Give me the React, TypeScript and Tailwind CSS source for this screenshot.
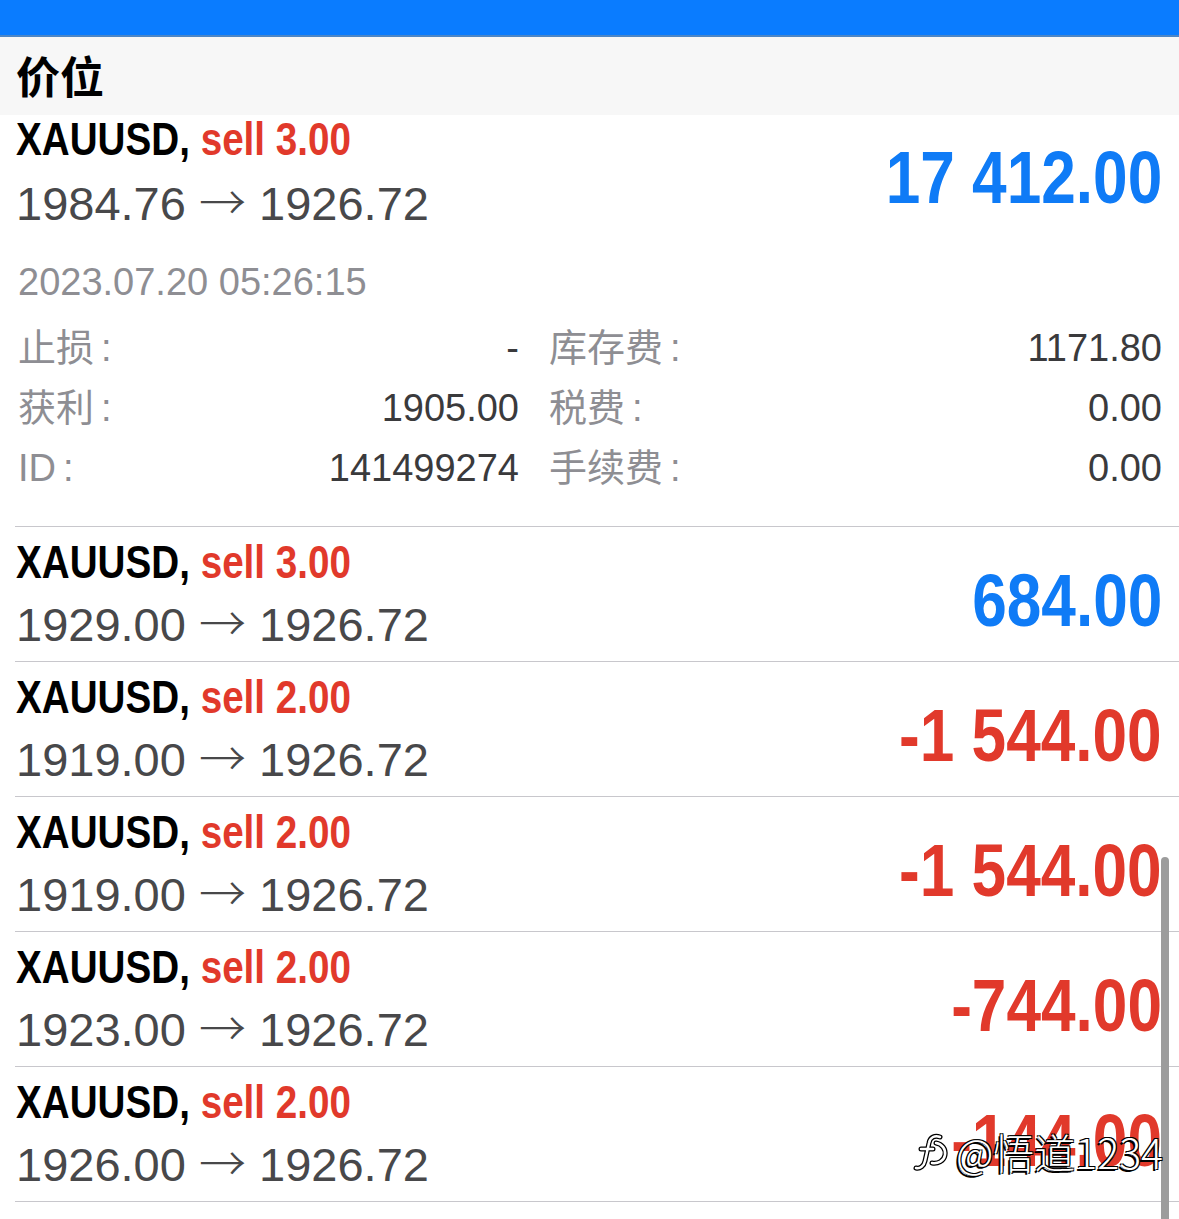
const cond = "font-['Liberation_Sans',sans-serif] font-bold"
const sans = "font-['Liberation_Sans','Noto_Sans_CJK_SC',sans-serif]"
const cjk = "font-['Liberation_Sans','Noto_Sans_CJK_SC',sans-serif]"

type Position = {
  symbol: string
  side: string
  open: string
  current: string
  profit: string
  up: boolean
}

const positions: Position[] = [
  { symbol: "XAUUSD,", side: "sell 3.00", open: "1929.00", current: "1926.72", profit: "684.00", up: true },
  { symbol: "XAUUSD,", side: "sell 2.00", open: "1919.00", current: "1926.72", profit: "-1 544.00", up: false },
  { symbol: "XAUUSD,", side: "sell 2.00", open: "1919.00", current: "1926.72", profit: "-1 544.00", up: false },
  { symbol: "XAUUSD,", side: "sell 2.00", open: "1923.00", current: "1926.72", profit: "-744.00", up: false },
  { symbol: "XAUUSD,", side: "sell 2.00", open: "1926.00", current: "1926.72", profit: "-144.00", up: false },
  { symbol: "XTIUSD,", side: "sell 10.00", open: "75.84", current: "75.61", profit: "230.00", up: true },
]

function Title({ symbol, side }: { symbol: string; side: string }) {
  return (
    <div className={`${cond} origin-left scale-x-[0.84] whitespace-nowrap text-[46px] leading-none text-black`}>
      {symbol} <span className="text-[#e1392b]">{side}</span>
    </div>
  )
}

function Prices({ open, current }: { open: string; current: string }) {
  return (
    <div className={`${sans} h-[47px] whitespace-nowrap text-[47px] leading-none text-[#48484a]`}>
      {open} <span className="font-['Noto_Sans_CJK_SC',sans-serif] font-light leading-[0]">→</span> {current}
    </div>
  )
}

function Profit({ value, up }: { value: string; up: boolean }) {
  return (
    <div
      className={`${cond} mt-[25px] origin-right scale-x-[0.84] whitespace-nowrap text-[74px] leading-none ${
        up ? "text-[#0f7bf6]" : "text-[#e1392b]"
      }`}
    >
      {value}
    </div>
  )
}

function Detail({ label, value }: { label: string; value: string }) {
  return (
    <div className="flex h-[60px] items-center justify-between">
      <span className={`${cjk} text-[38px] leading-none text-[#8e8e93]`}>
        {label}
        <span className="ml-[7px]">:</span>
      </span>
      <span className={`${sans} text-[38px] leading-none text-[#3a3a3c]`}>{value}</span>
    </div>
  )
}

function Divider() {
  return <div className="ml-[15px] h-px bg-[#c8c7cc]" />
}

export default function App() {
  return (
    <div className="relative h-[1219px] w-[1179px] overflow-hidden bg-white">
      <div className="h-[37px] border-b-2 border-[#4c86c6] bg-[#0a7cff]" />
      <div className="flex h-[78px] items-center bg-[#f7f7f7] px-4 pt-[6px]">
        <span className={`${cjk} text-[44px] font-bold leading-none text-black`}>价位</span>
      </div>

      {/* expanded position */}
      <div className="pl-4 pr-[17px] pb-[28px] pt-px">
        <div className="flex items-start justify-between">
          <div className="flex flex-col gap-[18px]">
            <Title symbol="XAUUSD," side="sell 3.00" />
            <Prices open="1984.76" current="1926.72" />
          </div>
          <Profit value="17 412.00" up />
        </div>
        <div className={`${sans} mt-[36px] pl-[2px] text-[38px] leading-none text-[#8e8e93]`}>
          2023.07.20 05:26:15
        </div>
        <div className="mt-[17px] grid grid-cols-[501px_1fr] gap-x-[30px] pl-[2px]">
          <Detail label="止损" value="-" />
          <Detail label="库存费" value="1171.80" />
          <Detail label="获利" value="1905.00" />
          <Detail label="税费" value="0.00" />
          <Detail label="ID" value="141499274" />
          <Detail label="手续费" value="0.00" />
        </div>
      </div>
      <Divider />

      {positions.map((p, i) => (
        <div key={i}>
          <div className="flex h-[134px] items-start justify-between pl-4 pr-[17px] pt-[12px]">
            <div className="flex flex-col gap-[16px]">
              <Title symbol={p.symbol} side={p.side} />
              <Prices open={p.open} current={p.current} />
            </div>
            <Profit value={p.profit} up={p.up} />
          </div>
          <Divider />
        </div>
      ))}

      {/* scroll indicator */}
      <div className="absolute left-[1161px] top-[857px] h-[400px] w-[8px] rounded-full bg-[#9c9c9c]" />

      {/* watermark */}
      <div className="absolute left-[912px] top-[1128px] flex items-center gap-[4px] text-white">
        <svg width="40" height="46" viewBox="0 0 40 44" fill="none">
          <path
            d="M28 8c-5-2-10 0-11 6l-4 18c-1 5-5 8-9 7M9 20h12M24 14c6 1 10 6 9 12s-7 9-13 8"
            stroke="#000"
            strokeWidth="5"
            strokeLinecap="round"
          />
          <path
            d="M28 8c-5-2-10 0-11 6l-4 18c-1 5-5 8-9 7M9 20h12M24 14c6 1 10 6 9 12s-7 9-13 8"
            stroke="#fff"
            strokeWidth="2.5"
            strokeLinecap="round"
          />
        </svg>
        <span className="font-['Noto_Sans_CJK_SC',sans-serif] text-[41px] font-light leading-none [text-shadow:-2px_2px_0_#000,1px_-1px_0_#000,-1px_-1px_0_#000,1px_1px_0_#000]">
          @悟道1234
        </span>
      </div>
    </div>
  )
}
